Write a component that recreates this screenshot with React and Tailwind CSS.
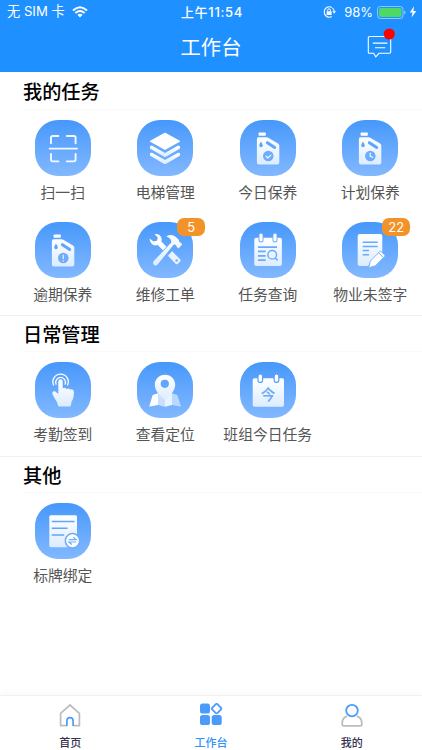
import React from "react";

const CanIcon = ({ children }) => (
  <>
    <rect x="18.6" y="12.6" width="7.2" height="3.2" rx="0.7" fill="#fff" />
    <path
      d="M18.5 17.3H26.4Q27.4 17.3 28.2 17.8L38 23.6Q39.3 24.4 39.3 25.8V42.4Q39.3 44.4 37.3 44.4H18.9Q16.9 44.4 16.9 42.4V18.9Q16.9 17.3 18.5 17.3Z"
      fill="url(#paper)"
    />
    <path d="M27.4 22.7L34.7 27.4" stroke="#5ea5fb" strokeWidth="3" strokeLinecap="round" />
    <path d="M21 21.4C22 23.2 22.8 24.3 22.8 25.4A1.8 1.8 0 0 1 19.2 25.4C19.2 24.3 20 23.2 21 21.4Z" fill="#5ea5fb" />
    <circle cx="28.3" cy="36" r="5.3" fill="#6dadfc" />
    {children}
  </>
);

const icons = {
  scan: (
    <g fill="none" stroke="#f4f9ff" strokeWidth="1.9" strokeLinecap="round">
      <path d="M16 23.2V17.8Q16 16 17.8 16H23.4M31.8 16H38.8Q40.6 16 40.6 17.8V23.2M40.6 34V39.6Q40.6 41.4 38.8 41.4H31.8M23.4 41.4H17.8Q16 41.4 16 39.6V34" />
      <path d="M14.6 28.6H42" />
    </g>
  ),
  layers: (
    <g fill="url(#paper)">
      <path d="M27.2 13.1Q28 12.6 28.8 13.1L42.8 20.8Q43.5 21.3 42.8 21.8L28.8 29.6Q28 30 27.2 29.6L13.2 21.8Q12.5 21.3 13.2 20.8Z" fill="#fff" />
      <path d="M13.2 26L15 25.6L28 33L41 25.6L42.8 26Q43.5 28.3 42.8 28.7L28.8 36.8Q28 37.2 27.2 36.8L13.2 28.7Q12.5 28.3 13.2 26Z" />
      <path d="M13.2 33L15 32.7L28 40.1L41 32.7L42.8 33Q43.5 35.4 42.8 35.8L28.8 43.9Q28 44.3 27.2 43.9L13.2 35.8Q12.5 35.4 13.2 33Z" />
    </g>
  ),
  canCheck: (
    <CanIcon>
      <path d="M25.7 35.9L27.8 37.9L31.2 34.8" fill="none" stroke="#fff" strokeWidth="1.1" />
    </CanIcon>
  ),
  canClock: (
    <CanIcon>
      <path d="M28.2 32.8V36.4L31.2 37.6" fill="none" stroke="#fff" strokeWidth="1.1" />
    </CanIcon>
  ),
  canAlert: (
    <CanIcon>
      <path d="M28.3 32.8V37M28.3 38.2V39.5" stroke="#d9eaff" strokeWidth="1.4" />
    </CanIcon>
  ),
  tools: (
    <>
      <path
        d="M17.6 12.3Q21.5 11.4 23.8 14.4Q25.3 16.6 24.4 19.6L29.5 24.7L26 28.2L20.7 23Q17.2 24.2 14.6 21.8Q12.3 19.6 12.7 16.5L16.5 19.6L20 18.8L20.8 15.6Z"
        fill="#fff"
      />
      <path d="M35.1 29.2L43.1 37.2Q44.2 38.4 43.2 39.5L40.9 41.8Q39.7 42.7 38.6 41.7L30.9 33.7Z" fill="#e9f3ff" />
      <circle cx="39.7" cy="38.5" r="1.3" fill="#75b1fd" />
      <path
        d="M29.3 14.5Q34.4 11.5 38.9 14.9L42 18.1Q41.8 20.2 43.5 20.6L45.2 22.6L41.5 26.6L39.5 24.6Q39.5 22.5 37.7 22.4L36.4 22.9L20.6 42.6Q18.9 44.3 17.1 42.9Q15.2 41.2 16.8 39.1L34.3 20.4Q34.6 16.2 29.3 14.5Z"
        fill="url(#paper)"
      />
    </>
  ),
  search: (
    <>
      <rect x="14.3" y="15.7" width="27.6" height="28.4" rx="2" fill="url(#paper)" />
      <path d="M21 13.6V18M35 13.6V18" stroke="#62a7fb" strokeWidth="5" strokeLinecap="round" />
      <path d="M21 13.2V18M35 13.2V18" stroke="#fff" strokeWidth="3.2" strokeLinecap="round" />
      <g fill="none" stroke="#67aafb" strokeWidth="1.7">
        <path d="M18 25.2H37M18 29.4H25.7M18 33.8H25.7M18 38.2H25.7" />
        <circle cx="32.2" cy="32.8" r="4.3" strokeWidth="1.4" />
        <path d="M35.2 36L37.6 38.4" strokeWidth="1.5" />
      </g>
    </>
  ),
  sign: (
    <>
      <path d="M17.7 12H38.3Q40.3 12 40.3 14V29.5L28 41L26 44H17.7Q15.7 44 15.7 42V14Q15.7 12 17.7 12Z" fill="url(#paper)" />
      <path d="M20.7 20.2H35.7M20.7 24.4H35.7M20.7 28.5H27M20.7 32.7H27" stroke="#67aafb" strokeWidth="1.5" />
      <path
        d="M26.9 44.5L28.2 39.6Q28.5 38.8 29.1 38.2L37.7 29.7Q38.4 29 39.2 29.7L42.7 33.1Q43.4 33.8 42.7 34.6L34 43.2Q33.4 43.8 32.6 44L27.8 45.4Q26.6 45.6 26.9 44.5Z"
        fill="#fff"
        stroke="#70aefc"
        strokeWidth="0.9"
      />
      <path d="M36.8 31L41.5 35.6" stroke="#70aefc" strokeWidth="1" />
    </>
  ),
  touch: (
    <>
      <g fill="none" stroke="#fff" strokeWidth="1.3" strokeLinecap="round">
        <path d="M18.6 23A7.7 7.7 0 1 1 32.6 23" />
        <path d="M21.1 22.2A4.9 4.9 0 1 1 30.1 22.2" />
      </g>
      <path
        d="M23.3 19.5A2.2 2.2 0 0 1 27.7 19.5V26.2Q30.2 25 31.4 27Q33.6 25.8 35 27.4Q38.9 26.8 38.9 30.4Q38.9 36.4 36.6 39.5L36 43Q35.8 44.6 34.2 44.6H24.6Q23 44.6 22.9 43Q22.8 41 20.8 38.2L17.6 32.4Q16.7 30 18.7 29.3Q20.3 29 21.5 30.4L23.3 32Z"
        fill="url(#paper)"
      />
    </>
  ),
  pin: (
    <>
      <path d="M15.7 33L21 31.3V43L12.9 44.5Q12.2 44.6 12.4 43.8Z" fill="#fff" />
      <path d="M21 31.3L28 34V44.8L21 43Z" fill="#c7e0ff" />
      <path d="M28 34L35 31.3V43L28 44.8Z" fill="#eaf4ff" />
      <path d="M35 31.3L40.3 33L43.8 43.8Q44 44.6 43.2 44.5L35 43Z" fill="#b9d8ff" />
      <path d="M28 12.7C34 12.7 38.2 17.3 38.2 22.7C38.2 28.5 33.6 33 28.7 37.8Q28 38.5 27.3 37.8C22.4 33 17.8 28.5 17.8 22.7C17.8 17.3 22 12.7 28 12.7Z" fill="url(#paper)" />
      <circle cx="27.8" cy="21.8" r="4.1" fill="#61a7fb" />
    </>
  ),
  today: (
    <>
      <rect x="12.7" y="16.2" width="31.3" height="28.5" rx="1.8" fill="url(#paper)" />
      <g fill="#fff" stroke="#57a1fb" strokeWidth="1.2">
        <rect x="18" y="12" width="4.6" height="8.4" rx="2.2" />
        <rect x="34.2" y="12" width="4.6" height="8.4" rx="2.2" />
      </g>
      <text x="28" y="37.5" textAnchor="middle" fontSize="14.5" fontWeight="500" fill="#67a9f8">
        今
      </text>
    </>
  ),
  tag: (
    <>
      <rect x="14.3" y="12.2" width="27.7" height="32" rx="1.5" fill="url(#paper)" />
      <path d="M17.3 18.4H39M17.3 25.2H32M17.3 31.9H28.5" stroke="#5ea5fb" strokeWidth="1.5" strokeLinecap="round" />
      <circle cx="37.5" cy="37.8" r="7.2" fill="#fff" stroke="#6dadfc" strokeWidth="1.5" />
      <path d="M33.8 36.7H41.2L38.2 34.1M41.2 39H33.8L36.8 41.5" fill="none" stroke="#6dadfc" strokeWidth="1.2" />
    </>
  ),
};

const sections = [
  {
    title: "我的任务",
    items: [
      { name: "扫一扫", icon: "scan" },
      { name: "电梯管理", icon: "layers" },
      { name: "今日保养", icon: "canCheck" },
      { name: "计划保养", icon: "canClock" },
      { name: "逾期保养", icon: "canAlert" },
      { name: "维修工单", icon: "tools", badge: 5 },
      { name: "任务查询", icon: "search" },
      { name: "物业未签字", icon: "sign", badge: 22 },
    ],
  },
  {
    title: "日常管理",
    items: [
      { name: "考勤签到", icon: "touch" },
      { name: "查看定位", icon: "pin" },
      { name: "班组今日任务", icon: "today" },
    ],
  },
  {
    title: "其他",
    items: [{ name: "标牌绑定", icon: "tag" }],
  },
];

const StatusBar = () => (
  <div className="grid h-6 grid-cols-3 items-center pl-[7px] pr-[5px] text-[13px] leading-none text-white">
    <div className="flex items-center gap-[7px]">
      <span className="text-[13.2px]">无 SIM 卡</span>
      <svg width="16" height="12" viewBox="0 0 16 12" fill="none" stroke="#fff" strokeWidth="2">
        <path d="M1 4.5Q8-2 15 4.5M3.4 7.1Q8 2.9 12.6 7.1" />
        <path d="M8 11.5L5.4 8.8Q8 6.7 10.6 8.8Z" fill="#fff" stroke="none" />
      </svg>
    </div>
    <div className="text-center text-[13px] font-medium tracking-[0.7px]">上午11:54</div>
    <div className="flex items-center justify-end">
      <svg className="mr-[8px]" width="13" height="12" viewBox="0 0 13 12" fill="none" stroke="#fff">
        <path d="M8.8 1.4A5.2 5.2 0 1 0 8.8 10.6M9.4 1.8A5.2 5.2 0 0 1 11.2 5.6" strokeWidth="1.1" />
        <path d="M9.3 5.3H13L11.1 7.8Z" fill="#fff" stroke="none" />
        <rect x="3.6" y="5.3" width="5" height="3.6" rx="0.5" fill="#fff" stroke="none" />
        <path d="M4.7 5.3V4.2A1.4 1.4 0 0 1 7.5 4.2V5.3" />
      </svg>
      <span className="mr-1">98%</span>
      <svg className="mr-[3px]" width="29" height="13" viewBox="0 0 29 13">
        <rect x="0.5" y="0.5" width="25.5" height="12" rx="2.8" fill="none" stroke="#93c8ff" />
        <rect x="2" y="2" width="22.5" height="9" rx="1.5" fill="#4cd964" />
        <path d="M27.2 4.5Q28.6 5 28.6 6.5Q28.6 8 27.2 8.5Z" fill="#93c8ff" />
      </svg>
      <svg width="8" height="12" viewBox="0 0 8 12" fill="#fff">
        <path d="M5 0.3L0.8 6.6H3.5L2.6 11.6L7.2 5.1H4.4Z" />
      </svg>
    </div>
  </div>
);

const App = () => {
  return (
    <div className="flex h-[750px] w-[422px] flex-col overflow-hidden bg-white font-['Inter','Noto_Sans_CJK_SC',sans-serif]">
      {/* SHARED GRADIENTS */}
      <svg width="0" height="0" className="absolute">
        <defs>
          <linearGradient id="paper" x1="0" y1="0" x2="0" y2="1">
            <stop offset="0" stopColor="#ffffff" />
            <stop offset="1" stopColor="#dcecff" />
          </linearGradient>
        </defs>
      </svg>

      {/* HEADER */}
      <header className="h-[72px] shrink-0 bg-[#1e90ff]">
        <StatusBar />
        <div className="grid h-12 grid-cols-3 items-start">
          <h1 className="col-start-2 text-center text-[20.3px] leading-[47px] text-white">工作台</h1>
          <div className="mr-[27px] mt-[4px] justify-self-end">
            <svg width="28" height="30" viewBox="0 0 28 30" fill="none" stroke="#fff" strokeWidth="1.1">
              <path d="M2.5 8.5H22.5Q23.7 8.5 23.7 9.7V24.1Q23.7 25.3 22.5 25.3H12L8.8 28.8L6.6 25.3H2.5Q1.3 25.3 1.3 24.1V9.7Q1.3 8.5 2.5 8.5Z" />
              <path d="M5.8 15.1H20.3M8 19.7H18.3" />
              <circle cx="22.3" cy="6" r="5.6" fill="#f00" stroke="none" />
            </svg>
          </div>
        </div>
      </header>

      {/* SECTIONS */}
      <main className="flex-1">
        {sections.map((section) => (
          <section key={section.title} className="group border-t border-[#f1f1f1] pb-[6px] first:border-0 first:pb-[5px]">
            <h2 className="ml-[23px] h-[36px] border-b border-[#fafafa] text-[19.2px] font-medium leading-[38px] text-black group-first:h-[38px] group-first:leading-[40px]">
              {section.title}
            </h2>
            <div className="ml-[11.5px] mt-[10px] grid w-[410px] grid-cols-4 gap-y-[14px]">
              {section.items.map((item) => (
                <div key={item.name} className="flex h-[88px] flex-col items-center">
                  <div className="relative h-14 w-14 rounded-[23px] bg-linear-to-b from-[#4598fb] to-[#82b8ff]">
                    <svg width="56" height="56" viewBox="0 0 56 56">
                      {icons[item.icon]}
                    </svg>
                    {item.badge && (
                      <span className="absolute -top-1 left-[40px] flex h-[18px] w-[28px] items-center justify-center rounded-[7px] bg-[#f29329] text-[13px] leading-none text-white">
                        {item.badge}
                      </span>
                    )}
                  </div>
                  <span className="mt-[6px] whitespace-nowrap text-[14.8px] leading-[22px] text-[#555]">
                    {item.name}
                  </span>
                </div>
              ))}
            </div>
          </section>
        ))}
      </main>

      {/* TAB BAR */}
      <nav className="grid h-[55px] shrink-0 grid-cols-3 border-t border-[#f2f2f2] bg-white text-[11px] font-medium text-[#37304f] shadow-[0_-2px_6px_rgba(0,0,0,0.03)]">
        <div className="flex flex-col items-center pt-[7px]">
          <svg width="24" height="24" viewBox="0 0 24 24" fill="none" strokeWidth="1.7" strokeLinejoin="round">
            <path d="M8.8 22.7H2.6V10.3L12 2L21.4 10.3V22.7H15.2" stroke="#bdbdbd" />
            <path d="M8.9 23V17.8A3.1 3.1 0 0 1 15.1 17.8V23" stroke="#4b9bfa" />
          </svg>
          <span className="mt-[8px] leading-4">首页</span>
        </div>
        <div className="flex flex-col items-center pt-[7px] text-[#2f93f7]">
          <svg width="24" height="24" viewBox="0 0 24 24" fill="#4b9bfa">
            <rect x="1" y="0.6" width="10" height="10" rx="2.6" />
            <rect x="1" y="12" width="10" height="10" rx="2.6" />
            <rect x="12.7" y="12" width="10" height="10" rx="2.6" />
            <rect x="13.9" y="1.9" width="7.4" height="7.4" rx="1.4" fill="none" stroke="#4b9bfa" strokeWidth="1.8" transform="rotate(45 17.6 5.6)" />
          </svg>
          <span className="mt-[8px] leading-4">工作台</span>
        </div>
        <div className="flex flex-col items-center pt-[7px]">
          <svg width="24" height="24" viewBox="0 0 24 24" fill="none" strokeWidth="1.8">
            <path d="M7.2 13.2Q2.2 14.8 2.2 20V21.5Q2.2 22.8 3.5 22.8H20.5Q21.8 22.8 21.8 21.5V20Q21.8 14.8 16.8 13.2" stroke="#bdbdbd" />
            <circle cx="12" cy="7.6" r="5.8" stroke="#4b9bfa" />
          </svg>
          <span className="mt-[8px] leading-4">我的</span>
        </div>
      </nav>
    </div>
  );
};

export default App;
